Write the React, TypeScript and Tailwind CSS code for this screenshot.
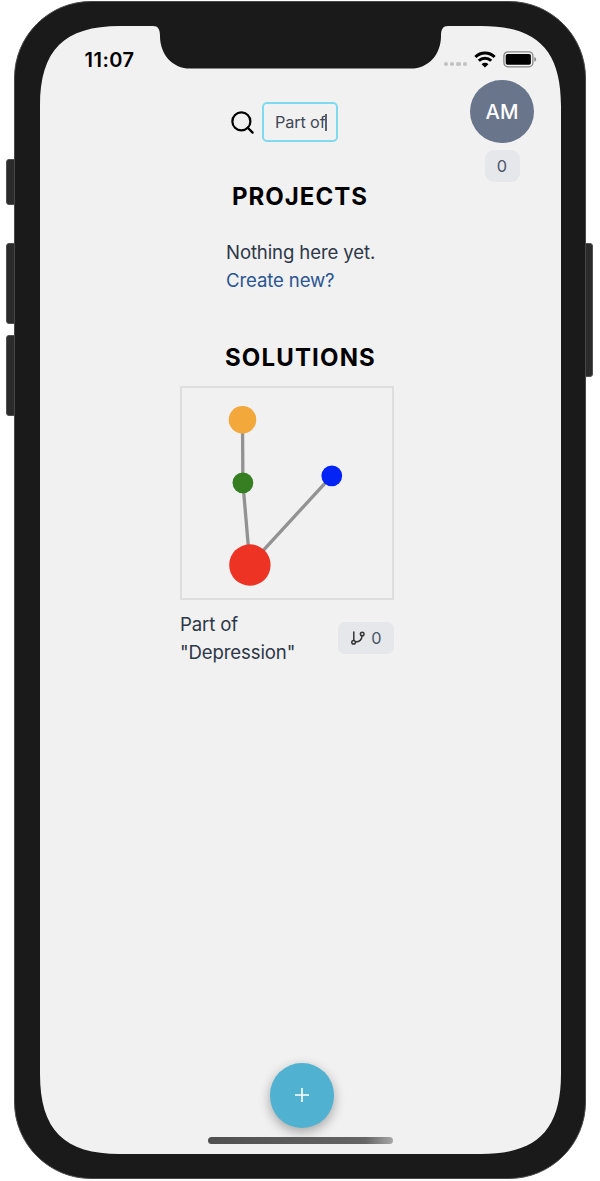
import React from "react";
import { Search } from "lucide-react";

const nodes = [
  { x: 62, y: 33.7, r: 13.8, fill: "#f3a83c" },
  { x: 62.4, y: 96.8, r: 10.4, fill: "#367e22" },
  { x: 151.3, y: 89.8, r: 10.4, fill: "#0423f5" },
  { x: 69.4, y: 179, r: 20.7, fill: "#ed3323" },
];

const links = [
  [0, 1],
  [1, 3],
  [2, 3],
];

function SideButton({ className }: { className: string }) {
  return <div className={`absolute border border-[#505050] bg-[#2b2b2b] ${className}`} />;
}

function WifiIcon() {
  return (
    <svg width="22" height="17" viewBox="0 0 22 17" fill="none" stroke="#000">
      <path d="M1.4 6a13.6 13.6 0 0 1 19.2 0" strokeWidth="3.1" />
      <path d="M4.8 9.8a8.8 8.8 0 0 1 12.4 0" strokeWidth="3" />
      <path d="M11 16.6 7.6 13.2a4.8 4.8 0 0 1 6.8 0Z" fill="#000" stroke="none" />
    </svg>
  );
}

function BatteryIcon() {
  return (
    <svg width="34" height="17" viewBox="0 0 34 17" fill="none">
      <rect x="0.9" y="0.9" width="29" height="14.9" rx="4" stroke="#858585" strokeWidth="1.3" />
      <rect x="2.7" y="2.9" width="25.2" height="10.9" rx="1.8" fill="#000" />
      <path d="M31.4 6c2.4 .9 2.4 3.9 0 4.8Z" fill="#858585" />
    </svg>
  );
}

function BranchIcon() {
  return (
    <svg width="16" height="16" viewBox="0 0 16 16" fill="none" stroke="#333" strokeWidth="1.5" strokeLinecap="round">
      <path d="M3.8 1.9V10" />
      <circle cx="3.6" cy="12.2" r="1.8" />
      <circle cx="12.2" cy="4" r="1.8" />
      <path d="M12 6c-.2 3.4-2.8 5.8-6.3 6" />
    </svg>
  );
}

function StatusBar() {
  return (
    <div className="flex h-[53px] shrink-0 justify-between pr-[24px] pl-[44.5px]">
      <span className="mt-[20px] h-7 text-[20px] leading-7 font-semibold tracking-[0.5px]">11:07</span>
      <div className="mt-[24.5px] flex h-[17px]">
        <div className="mt-[11.5px] flex gap-[2px]">
          {[0, 1, 2, 3].map((i) => (
            <span key={i} className="size-[4.3px] rounded-[1.8px] bg-[#c3c3c3]" />
          ))}
        </div>
        <div className="ml-[6.5px]">
          <WifiIcon />
        </div>
        <div className="ml-[7.5px]">
          <BatteryIcon />
        </div>
      </div>
    </div>
  );
}

function SolutionGraph() {
  return (
    <div className="ml-[140px] size-[214px] shrink-0 border-2 border-[#dedede]">
      <svg width="210" height="210" viewBox="1.5 2 210 210">
        {links.map(([a, b]) => (
          <line
            key={`${a}-${b}`}
            x1={nodes[a].x}
            y1={nodes[a].y}
            x2={nodes[b].x}
            y2={nodes[b].y}
            stroke="#929292"
            strokeWidth="3.3"
          />
        ))}
        {nodes.map((n) => (
          <circle key={n.fill} cx={n.x} cy={n.y} r={n.r} fill={n.fill} />
        ))}
      </svg>
    </div>
  );
}

export default function App() {
  return (
    <div className="relative h-[1181px] w-[600px] overflow-hidden bg-white font-['Inter',sans-serif] text-black">
      <SideButton className="top-[159px] left-[6px] h-[46px] w-[12px] rounded-[3px]" />
      <SideButton className="top-[243px] left-[6px] h-[81px] w-[12px] rounded-[3px]" />
      <SideButton className="top-[335px] left-[6px] h-[81px] w-[12px] rounded-[3px]" />
      <SideButton className="top-[243px] left-[580px] h-[134px] w-[12.5px] rounded-[3px]" />

      <div className="relative mt-px ml-[14px] h-[1178px] w-[572px] rounded-[77px] border border-[#484848] bg-[#1a1a1a] pt-[24px] pl-[25px]">
        <div className="flex h-[1128px] w-[521px] flex-col bg-[#f1f1f1] [clip-path:path('M0_80C0_24_24_0_80_0H113C118_0_120_3_120_10C120_29_133_42.6_150_42.6H371C388_42.6_401_29_401_10C401_3_403_0_408_0H441C497_0_521_24_521_80V1048C521_1104_497_1128_441_1128H80C24_1128_0_1104_0_1048Z')]">
          <StatusBar />

          <header className="flex h-[103px] shrink-0 justify-between pr-[27px] pl-[189px]">
            <div className="mt-[23px] flex h-10 items-center gap-[6px]">
              <Search size={27} strokeWidth={2} color="#000" />
              <div className="flex h-10 w-[76px] items-center rounded-[5px] border-2 border-[#7fdaef] pl-[11px] text-[16.3px] tracking-[-0.15px] text-[#3f4757]">
                <span className="whitespace-nowrap">Part of</span>
                <span className="-ml-px h-[17px] w-[2px] shrink-0 bg-[#596070]" />
              </div>
            </div>
            <div className="flex flex-col items-center gap-[7px]">
              <div className="mt-[0.5px] flex size-16 items-center justify-center rounded-full bg-[#69758b] pt-px text-[20.3px] font-medium text-white">
                AM
              </div>
              <div className="flex h-8 w-[35px] items-center justify-center rounded-[9px] bg-[#e5e7eb] text-[16.3px] text-[#4a5568]">
                0
              </div>
            </div>
          </header>

          <main className="flex flex-1 flex-col">
            <h2 className="pt-px pl-[192px] text-[24px] leading-7 font-bold tracking-[1px]">PROJECTS</h2>
            <div className="mt-[27px] pl-[186px] text-[18.6px] leading-7 tracking-[-0.13px] text-[#2d3748]">
              <p>Nothing here yet.</p>
              <a className="text-[#2a5591]">Create new?</a>
            </div>
            <h2 className="mt-[50px] mb-[13.5px] pl-[185px] text-[24px] leading-7 font-bold tracking-[1.15px]">SOLUTIONS</h2>
            <SolutionGraph />
            <div className="mt-[10.5px] ml-[140px] flex w-[214px] items-center justify-between">
              <p className="w-[130px] text-[18.6px] leading-7 tracking-[-0.13px] text-[#2d3748]">
                Part of
                <br />
                "Depression"
              </p>
              <div className="flex h-8 w-14 items-center justify-center gap-[5px] rounded-[7px] bg-[#e5e7eb] text-[16.3px] text-[#4a5568]">
                <BranchIcon />
                <span>0</span>
              </div>
            </div>
          </main>

          <footer className="flex h-[91px] shrink-0 flex-col">
            <button className="ml-[229.5px] flex size-[64.5px] items-center justify-center rounded-full bg-[#50b2d0] shadow-[0_4px_12px_rgba(0,0,0,0.32)]">
              <svg width="16" height="16" viewBox="0 0 16 16" stroke="#fff" strokeWidth="1.6">
                <path d="M8 1v14M1 8h14" />
              </svg>
            </button>
            <div className="mt-[9px] ml-[168px] h-[7px] w-[185px] rounded-full bg-linear-to-r from-[#505050] via-[#656565] via-85% to-[#a8a8a8]" />
          </footer>
        </div>
      </div>
    </div>
  );
}
